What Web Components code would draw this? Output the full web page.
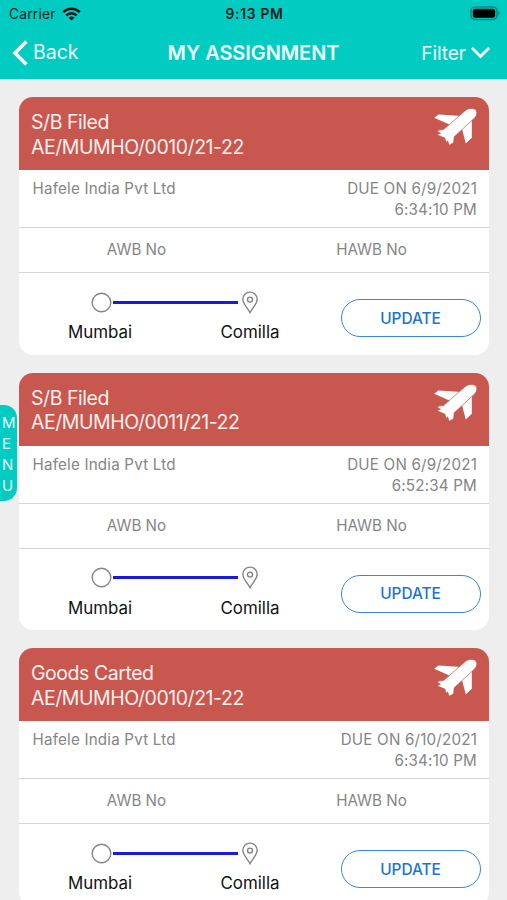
<!DOCTYPE html>
<html lang="en">
<head>
<meta charset="utf-8">
<title>My Assignment</title>
<style>
    html, body {
        margin: 0;
        height: 900px;
        overflow: hidden;
        background: #eeeeee;
    }
</style>
</head>
<body>
<assignment-app></assignment-app>

<script>
class StatusBar extends HTMLElement {
    constructor() {
        super();
        this.attachShadow({ mode: 'open' });
    }

    connectedCallback() {
        this.shadowRoot.innerHTML = `
            <style>
                :host {
                    display: grid;
                    grid-template-columns: 1fr auto 1fr;
                    align-items: center;
                    height: 26px;
                    padding: 1px 7px 0 9px;
                    box-sizing: border-box;
                    color: #06201e;
                    font-size: 13.8px;
                }
                .carrier {
                    display: flex;
                    align-items: center;
                    gap: 6px;
                    letter-spacing: 0.2px;
                }
                .time {
                    font-size: 13.8px;
                    font-weight: 600;
                    letter-spacing: 0.7px;
                }
                .battery { justify-self: end; }
                svg { display: block; }
            </style>
            <div class="carrier">
                <span>Carrier</span>
                <svg width="19" height="14" viewBox="0 0 19 14" fill="none" stroke="#06100f" stroke-width="2.5">
                    <path d="M1.2 5.2C5.8 .5 13.2 .5 17.8 5.2"/>
                    <path d="M4.3 8.4c2.9-2.9 7.5-2.9 10.4 0"/>
                    <path d="M9.5 13.6L6.5 10.6c1.7-1.6 4.3-1.6 6 0z" fill="#06100f" stroke="none"/>
                </svg>
            </div>
            <div class="time"><slot></slot></div>
            <svg class="battery" width="30" height="15" viewBox="0 0 30 15">
                <rect x="1" y="1" width="26" height="12.5" rx="4" fill="none" stroke="#078c83" stroke-width="1.6"/>
                <rect x="2.8" y="2.7" width="22.4" height="9.1" rx="2" fill="#000"/>
                <path d="M28.3 5v4.5c1.8-.8 1.8-3.7 0-4.5z" fill="#078c83"/>
            </svg>
        `;
    }
}

class NavBar extends HTMLElement {
    constructor() {
        super();
        this.attachShadow({ mode: 'open' });
    }

    connectedCallback() {
        this.shadowRoot.innerHTML = `
            <style>
                :host {
                    display: grid;
                    grid-template-columns: 1fr auto 1fr;
                    align-items: center;
                    height: 53px;
                    padding: 0 12px;
                    box-sizing: border-box;
                    color: #f2fffd;
                    font-size: 19.5px;
                }
                .back, .filter {
                    display: flex;
                    align-items: center;
                }
                .back { gap: 5px; }
                .filter {
                    gap: 5px;
                    justify-self: end;
                    margin-right: 5px;
                    font-size: 19.2px;
                    letter-spacing: -0.1px;
                }
                h1 {
                    margin: 0;
                    font-size: 19.9px;
                    font-weight: 600;
                    line-height: 24px;
                }
                svg {
                    display: block;
                    fill: none;
                    stroke: #fff;
                }
                .back span { padding-bottom: 1px; }
            </style>
            <div class="back">
                <svg width="16" height="26" viewBox="0 0 16 26" stroke-width="3.6"><path d="M14.4 1.5L3 13l11.4 11.5"/></svg>
                <span>Back</span>
            </div>
            <h1><slot></slot></h1>
            <div class="filter">
                <span>Filter</span>
                <svg width="19" height="12" viewBox="0 0 19 12" stroke-width="2.8" stroke-linecap="round"><path d="M1.8 1.8l7.7 7.7 7.7-7.7"/></svg>
            </div>
        `;
    }
}

class RouteLine extends HTMLElement {
    constructor() {
        super();
        this.attachShadow({ mode: 'open' });
    }

    connectedCallback() {
        this.shadowRoot.innerHTML = `
            <style>
                :host {
                    display: block;
                    width: 300px;
                    color: #111;
                    font-size: 16.9px;
                }
                .track {
                    display: flex;
                    align-items: center;
                    height: 24px;
                    padding-left: 65.5px;
                }
                .track i {
                    width: 125px;
                    height: 3px;
                    margin: 0 3px 0 1.5px;
                    background: #1a1adb;
                }
                .names {
                    display: grid;
                    grid-template-columns: 1fr 1fr;
                    line-height: 20px;
                    margin-top: 8px;
                    text-align: center;
                }
                svg {
                    display: block;
                    fill: none;
                    stroke: #858585;
                    stroke-width: 1.4;
                }
            </style>
            <div class="track">
                <svg width="21" height="21" viewBox="0 0 21 21"><circle cx="10.5" cy="10.5" r="9.3"/></svg>
                <i></i>
                <svg width="18" height="23" viewBox="0 0 18 23">
                    <path d="M9 21.6C7 17.3 1.8 13 1.8 8.3a7.2 7.2 0 0 1 14.4 0C16.2 13 11 17.3 9 21.6z"/>
                    <circle cx="9" cy="8.6" r="2.5"/>
                </svg>
            </div>
            <div class="names">
                <span>${this.getAttribute('from')}</span>
                <span>${this.getAttribute('to')}</span>
            </div>
        `;
    }
}

class AssignmentCard extends HTMLElement {
    constructor() {
        super();
        this.attachShadow({ mode: 'open' });
    }

    connectedCallback() {
        this.shadowRoot.innerHTML = `
            <style>
                :host {
                    display: block;
                    height: 257.5px;
                    flex: none;
                    border-radius: 14px;
                    overflow: hidden;
                    background: #fff;
                    color: #858585;
                    font-size: 15.2px;
                }
                header {
                    display: flex;
                    justify-content: space-between;
                    height: 73px;
                    padding: 13px 11px 0 12px;
                    box-sizing: border-box;
                    background: #c85750;
                    color: #fff0ec;
                    font-size: 19.5px;
                    line-height: 24.5px;
                    letter-spacing: -0.45px;
                }
                header svg { margin-top: -2px; }
                .row {
                    display: flex;
                    justify-content: space-between;
                    height: 58px;
                    padding: 8px 12px 0 13.5px;
                    box-sizing: border-box;
                    border-bottom: 1.5px solid #d6d6d6;
                    line-height: 21px;
                    letter-spacing: 0.18px;
                }
                .due { text-align: right; }
                .numbers {
                    display: grid;
                    grid-template-columns: 1fr 1fr;
                    height: 45px;
                    box-sizing: border-box;
                    border-bottom: 1.5px solid #d6d6d6;
                    line-height: 43px;
                    text-align: center;
                }
                footer {
                    display: flex;
                    justify-content: space-between;
                    padding: 17px 8.5px 0 6px;
                }
                button {
                    width: 140px;
                    height: 38px;
                    margin: 9px 0 0;
                    padding: 0;
                    border: 1.5px solid #3a86d8;
                    border-radius: 19px;
                    background: #fff;
                    color: #1c74d0;
                    font: 500 15.4px Inter, sans-serif;
                }
            </style>
            <header>
                <div>
                    <div><slot name="status"></slot></div>
                    <div><slot name="ref"></slot></div>
                </div>
                <svg width="44" height="42" viewBox="0 -2 44 42" fill="#fff">
                    <path d="M.2 7.8L4.4 4.4l19.8 1.4 4.2 2-9.6 8.2z"/>
                    <path d="M37.8 10.2v17.6l-6 5.6-3.9-15z"/>
                    <path d="M9.6 19.6L31.4 .4C34.5-2 39.8-2.2 41.8 0c2 2.2 1 6-1.7 8.4L20.2 26.8l-.6 6-4.4 2.4-1.6-4.4-1.3 1.8-1.5-4.6-7.8-3.2 3.5-1.6-3-1.6 1.2-1.5z" stroke="#c85750" stroke-width=".7"/>
                </svg>
            </header>
            <div class="row">
                <slot name="client"></slot>
                <div class="due">
                    <div>DUE ON <slot name="date"></slot></div>
                    <slot name="time"></slot>
                </div>
            </div>
            <div class="numbers"><span>AWB No</span><span>HAWB No</span></div>
            <footer>
                <slot name="route"></slot>
                <button>UPDATE</button>
            </footer>
        `;
    }
}

class MenuTab extends HTMLElement {
    constructor() {
        super();
        this.attachShadow({ mode: 'open' });
    }

    connectedCallback() {
        this.shadowRoot.innerHTML = `
            <style>
                :host {
                    display: flex;
                    flex-direction: column;
                    align-items: flex-start;
                    width: 17px;
                    height: 96px;
                    padding: 6.5px 0 0 2px;
                    box-sizing: border-box;
                    border-radius: 0 13px 13px 0;
                    background: #02cbc2;
                    color: #e8fffc;
                    font-size: 15px;
                    line-height: 21px;
                }
            </style>
            <span>M</span><span>E</span><span>N</span><span>U</span>
        `;
    }
}

class AssignmentApp extends HTMLElement {
    constructor() {
        super();
        this.attachShadow({ mode: 'open' });
        this.assignments = [
            { status: 'S/B Filed', ref: 'AE/MUMHO/0010/21-22', date: '6/9/2021', time: '6:34:10 PM' },
            { status: 'S/B Filed', ref: 'AE/MUMHO/0011/21-22', date: '6/9/2021', time: '6:52:34 PM' },
            { status: 'Goods Carted', ref: 'AE/MUMHO/0010/21-22', date: '6/10/2021', time: '6:34:10 PM' }
        ];
    }

    connectedCallback() {
        // Slotted text inherits from its slot, so the card sets type styles
        const cards = this.assignments.map(item => `
            <assignment-card>
                <span slot="status">${item.status}</span>
                <span slot="ref">${item.ref}</span>
                <span slot="client">Hafele India Pvt Ltd</span>
                <span slot="date">${item.date}</span>
                <span slot="time">${item.time}</span>
                <route-line slot="route" from="Mumbai" to="Comilla"></route-line>
            </assignment-card>
        `).join('');

        this.shadowRoot.innerHTML = `
            <style>
                :host {
                    display: block;
                    position: relative;
                    height: 900px;
                    overflow: hidden;
                    font-family: Inter, sans-serif;
                }
                .top { background: #02cbc2; }
                .list {
                    display: flex;
                    flex-direction: column;
                    gap: 18.2px;
                    padding: 18px 18px 0 19px;
                }
                /* The menu handle floats over the list */
                menu-tab {
                    position: absolute;
                    left: 0;
                    top: 405px;
                }
            </style>
            <div class="top">
                <status-bar>9:13 PM</status-bar>
                <nav-bar>MY ASSIGNMENT</nav-bar>
            </div>
            <div class="list">${cards}</div>
            <menu-tab></menu-tab>
        `;
    }
}

customElements.define('status-bar', StatusBar);
customElements.define('nav-bar', NavBar);
customElements.define('route-line', RouteLine);
customElements.define('assignment-card', AssignmentCard);
customElements.define('menu-tab', MenuTab);
customElements.define('assignment-app', AssignmentApp);
</script>
</body>
</html>
